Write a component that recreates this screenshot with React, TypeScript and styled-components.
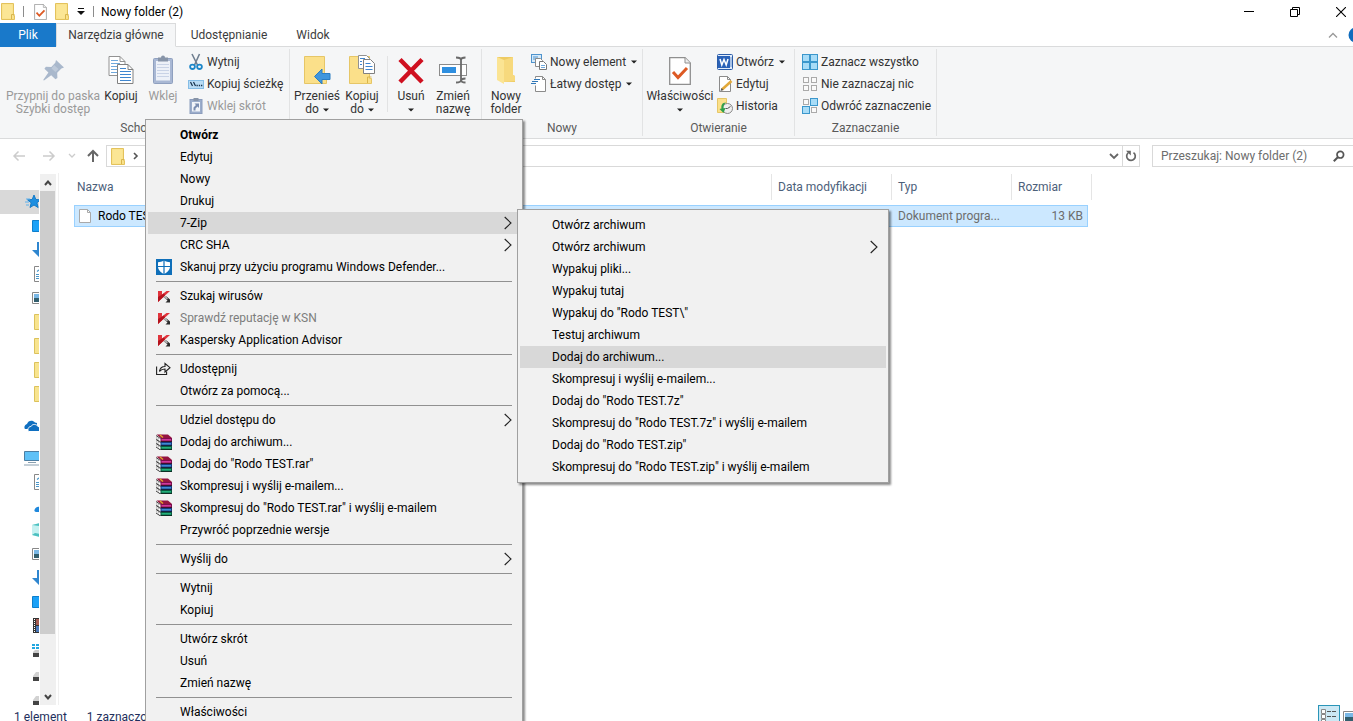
import React from "react";
import styled, { createGlobalStyle } from "styled-components";

const GlobalStyle = createGlobalStyle`
  * { box-sizing: border-box; }
  html, body { margin: 0; height: 100%; overflow: hidden; background: #fff; }
  body, button, input {
    font-family: Roboto, "Noto Sans", sans-serif;
    font-size: 12px;
    color: #000;
  }
  #root { height: 100%; }
  button { background: none; border: 0; padding: 0; margin: 0; }
  ul { list-style: none; margin: 0; padding: 0; }
  svg { display: block; flex: none; }
`;

/* ---------- window shell ---------- */

const Screen = styled.div`
  position: relative;
  height: 100vh;
  overflow: hidden;
`;

const Window = styled.div`
  display: flex;
  flex-direction: column;
  width: calc(100% + 11px);
  height: calc(100vh + 7px);
  background: #fff;
`;

const TitleBar = styled.header`
  display: flex;
  align-items: center;
  height: 23px;
  flex: none;
`;

const QuickAccess = styled.div`
  display: flex;
  align-items: center;
  gap: 8px;
  padding: 0 5px 0 1px;
`;

const QuickDivider = styled.span`
  width: 1px;
  height: 11px;
  margin-right: 2px;
  background: #8c8c8c;
`;

const Title = styled.h1`
  margin: 0;
  flex: 1;
  font-size: 12px;
  font-weight: 400;
`;

const CaptionButton = styled.button`
  display: flex;
  align-items: center;
  justify-content: center;
  width: 46px;
  height: 21px;
`;

/* ---------- ribbon ---------- */

const Tabs = styled.nav`
  display: flex;
  height: 24px;
  flex: none;
  position: relative;
  z-index: 1;
  margin-bottom: -1px;
`;

const Tab = styled.button<{ $kind?: "file" | "active"; $width: number }>`
  width: ${(p) => p.$width}px;
  height: 24px;
  color: ${(p) => (p.$kind === "file" ? "#fff" : "#3c3c3c")};
  background: ${(p) =>
    p.$kind === "file" ? "#1979ca" : p.$kind === "active" ? "#f5f6f7" : "transparent"};
  border: 1px solid transparent;
  border-color: ${(p) => (p.$kind === "active" ? "#dadbdc #dadbdc transparent" : "transparent")};
  background-clip: ${(p) => (p.$kind === "file" ? "border-box" : "padding-box")};
  ${(p) => p.$kind === "active" && "border-bottom-color: #f5f6f7;"}
`;

const TabTools = styled.div`
  display: flex;
  align-items: center;
  gap: 10px;
  margin-left: auto;
`;

const Ribbon = styled.section`
  display: flex;
  flex: none;
  height: 93px;
  background: #f5f6f7;
  border-top: 1px solid #dadbdc;
  border-bottom: 1px solid #dadbdc;
`;

const Group = styled.div<{ $width: number }>`
  display: flex;
  flex-direction: column;
  width: ${(p) => p.$width}px;
  margin: 2px 0;
  padding: 2px 0 0 4px;
  border-right: 1px solid #e2e3e4;
`;

const GroupBody = styled.div`
  display: flex;
  height: 71px;
`;

const GroupName = styled.div`
  margin-left: -4px;
  text-align: center;
  line-height: 15px;
  color: #5a5a5a;
`;

const BigButton = styled.button<{ $width: number; $off?: boolean }>`
  display: flex;
  flex-direction: column;
  align-items: center;
  justify-content: flex-start;
  gap: 3px;
  width: ${(p) => p.$width}px;
  padding-top: 4px;
  line-height: 13px;
  white-space: nowrap;
  color: ${(p) => (p.$off ? "#9a9a9a" : "#333")};
`;

const BigLabel = styled.span`
  display: flex;
  flex-direction: column;
  align-items: center;
`;

const LabelLine = styled.span`
  display: flex;
  align-items: center;
  gap: 4px;
  min-height: 13px;
`;

const InnerDivider = styled.span`
  width: 1px;
  height: 56px;
  margin: 5px 3px 0;
  background: #e2e3e4;
`;

const SmallColumn = styled.div<{ $gap: number }>`
  margin-left: ${(p) => p.$gap}px;
`;

const SmallButton = styled.button<{ $off?: boolean }>`
  display: flex;
  align-items: center;
  gap: 3px;
  height: 22px;
  white-space: nowrap;
  color: ${(p) => (p.$off ? "#9a9a9a" : "#333")};
  > svg:last-child:not(:first-child) { margin-left: 2px; }
`;

/* ---------- address row ---------- */

const AddressRow = styled.div`
  display: flex;
  align-items: center;
  height: 34px;
  flex: none;
`;

const NavButtons = styled.div`
  display: flex;
  align-items: center;
  width: 106px;
  padding-left: 12px;
`;

const NavButton = styled.button<{ $width: number }>`
  width: ${(p) => p.$width}px;
  height: 22px;
`;

const AddressBox = styled.div`
  display: flex;
  align-items: center;
  gap: 8px;
  flex: 1;
  height: 22px;
  padding-left: 4px;
  border: 1px solid #d9d9d9;
`;

const AddressButton = styled.button<{ $line?: boolean }>`
  display: flex;
  align-items: center;
  justify-content: center;
  width: 17px;
  height: 20px;
  border-left: 1px solid ${(p) => (p.$line ? "#d9d9d9" : "transparent")};
`;

const AddressEnd = styled.div`
  display: flex;
  margin-left: auto;
`;

const SearchBox = styled.label`
  display: flex;
  align-items: center;
  width: 204px;
  height: 22px;
  margin: 0 8px 0 12px;
  padding: 0 10px 0 8px;
  border: 1px solid #d9d9d9;
`;

const SearchInput = styled.input`
  flex: 1;
  min-width: 0;
  padding: 0;
  border: 0;
  outline: 0;
  background: transparent;
  &::placeholder { color: #6d6d6d; opacity: 1; }
`;

/* ---------- body ---------- */

const Body = styled.main`
  display: flex;
  flex: 1;
  min-height: 0;
`;

const Tree = styled.ul`
  width: 39px;
  overflow: hidden;
  padding-top: 17px;
`;

const TreeItem = styled.li<{ $root?: boolean; $selected?: boolean; $gap?: boolean }>`
  display: flex;
  align-items: center;
  height: 24px;
  margin-top: ${(p) => (p.$gap ? 8 : 0)}px;
  padding-left: ${(p) => (p.$root ? 24 : 32)}px;
  background: ${(p) => (p.$selected ? "#d9d9d9" : "transparent")};
`;

const ScrollBar = styled.div`
  display: flex;
  flex-direction: column;
  width: 16px;
  margin: 1px 2px 0 1px;
  background: #f0f0f0;
`;

const ScrollButton = styled.button`
  display: flex;
  align-items: center;
  justify-content: center;
  height: 17px;
`;

const ScrollThumb = styled.div`
  width: 15px;
  flex: 443;
  background: #cdcdcd;
`;

const ScrollRest = styled.div`
  flex: 54;
`;

const Files = styled.section`
  flex: 1;
  border-left: 1px solid #f0f0f0;
  padding: 1px 0 0 15px;
`;

const FileTable = styled.table`
  width: 1018px;
  table-layout: fixed;
  border-collapse: separate;
  border-spacing: 0;
`;

const HeadCell = styled.th`
  padding: 0 0 5px;
  font-weight: 400;
  text-align: left;
  color: #4c607a;
`;

const HeadLabel = styled.span<{ $start: number }>`
  display: block;
  height: 26px;
  line-height: 26px;
  padding-left: ${(p) => p.$start}px;
  border-right: 1px solid #e5e5e5;
`;

const OpenHeadLabel = styled(HeadLabel)`
  border-right: 0;
`;

const FileCell = styled.td<{ $edge?: "start" | "end" }>`
  height: 22px;
  padding: 0 4px 0 ${(p) => (p.$edge === "start" ? 4 : 6)}px;
  color: #6d6d6d;
  background: #cce8ff;
  border: 1px solid #99d1ff;
  border-left-width: ${(p) => (p.$edge === "start" ? 1 : 0)}px;
  border-right-width: ${(p) => (p.$edge === "end" ? 1 : 0)}px;
  text-align: ${(p) => (p.$edge === "end" ? "right" : "left")};
  white-space: nowrap;
`;

const FileName = styled.span`
  display: flex;
  align-items: center;
  gap: 7px;
  color: #000;
`;

const StatusBar = styled.footer`
  display: flex;
  align-items: center;
  gap: 20px;
  height: 23px;
  flex: none;
  padding-left: 14px;
  color: #1e2f5c;
`;

const ViewButtons = styled.div`
  display: flex;
  margin-left: auto;
  padding-right: 2px;
`;

const ViewButton = styled.button<{ $on?: boolean }>`
  display: flex;
  align-items: center;
  justify-content: center;
  width: 22px;
  height: 23px;
  background: ${(p) => (p.$on ? "#cce8f4" : "transparent")};
  border: 1px solid ${(p) => (p.$on ? "#2a95b8" : "transparent")};
`;

/* ---------- context menus ---------- */

const Menu = styled.ul<{ $width: number }>`
  position: absolute;
  z-index: 5;
  width: ${(p) => p.$width}px;
  padding: 4px 2px;
  background: #f1f1f1;
  border: 1px solid #a0a0a0;
  box-shadow: 2px 2px 2px rgba(0, 0, 0, 0.45);
`;

const ContextMenu = styled(Menu)`
  left: 145px;
  top: 119px;
`;

const SubMenu = styled(Menu)`
  left: calc(100% - 3px);
  top: -3px;
`;

const Entry = styled.li<{ $hot?: boolean }>`
  position: relative;
  background: ${(p) => (p.$hot ? "#d8d8d8" : "transparent")};
`;

const EntryButton = styled.button<{ $bold?: boolean; $off?: boolean }>`
  display: flex;
  align-items: center;
  width: 100%;
  height: 22px;
  padding: 0 8px;
  white-space: nowrap;
  font-weight: ${(p) => (p.$bold ? 700 : 400)};
  color: ${(p) => (p.$off ? "#7d7d7d" : "#000")};
`;

const EntryIcon = styled.span`
  width: 16px;
  height: 16px;
  margin-right: 8px;
`;

const EntryText = styled.span`
  flex: 1;
  text-align: left;
`;

const Rule = styled.li`
  height: 1px;
  margin: 3px 8px;
  background: #919191;
`;

/* ---------- icons ---------- */

const Caret = () => (
  <svg width="6" height="4" viewBox="0 0 6 4"><path d="M0 0.500h6L3 3.500z" fill="#222" /></svg>
);

const FolderSmall = () => (
  <svg width="14" height="17" viewBox="0 0 14 17">
    <path d="M0.500 0.500h12v12h1v4h-13z" fill="#f9df86" stroke="#e3c25c" />
    <path d="M1.500 1.500h10v14h-10z" fill="#fbe695" />
    <path d="M10.500 16v-4.500h3" fill="none" stroke="#d9b64c" />
  </svg>
);

const CheckDoc = ({ w, h }: { w: number; h: number }) => (
  <svg width={w} height={h} viewBox="0 0 22 28">
    <path d="M0.700 0.700h15.300l5.300 5.300v21.300h-20.600z" fill="#fff" stroke="#8f8f8f" strokeWidth="1.300" />
    <path d="M16 0.700v5.300h5.300" fill="#eee" stroke="#8f8f8f" />
    <path d="M4 15l5 5.500L18 11" fill="none" stroke="#dd5a24" strokeWidth="3" />
  </svg>
);

const QuickMore = () => (
  <svg width="8" height="7" viewBox="0 0 8 7"><path d="M1 0h6v1H1zM0 3h8L4 7z" fill="#111" /></svg>
);

const PinIcon = () => (
  <svg width="32" height="32" viewBox="0 0 32 32">
    <path d="M19 5l8 7.500-2.600 1-4.200 4.300.200 5.200-2 1.200-4.200-4L7 25.500l-.800-.600 5.200-7.300-4-3.800 1.500-2 5.400.200 4-4.200z" fill="#a9b8cc" />
    <path d="M17 10l-2.500 3.500 4 3.500 3-3z" fill="#bdc9d9" />
  </svg>
);

const CopyIcon = () => (
  <svg width="26" height="32" viewBox="0 0 26 32">
    <path d="M1 1.500h11l5 5v14H1z" fill="#fff" stroke="#929292" />
    <path d="M12 1.500v5h5" fill="none" stroke="#929292" />
    <path d="M3 5.500h7M3 8.500h9M3 11.500h9M3 14.500h6M3 17.500h6" stroke="#6fa8dc" />
    <path d="M9.500 9.500h10.500l5 5v14h-15.500z" fill="#fff" stroke="#808080" />
    <path d="M20 9.500v5h5" fill="none" stroke="#808080" />
    <path d="M12 13.500h6M12 16.500h11M12 19.500h11M12 22.500h11M12 25.500h11" stroke="#3f86cf" />
  </svg>
);

const PasteIcon = () => (
  <svg width="22" height="32" viewBox="0 0 22 32">
    <rect x="1.500" y="3.500" width="19" height="25" rx="1" fill="#a9b8d4" stroke="#8fa0bf" />
    <rect x="4" y="6" width="14" height="19.500" fill="#edf1f8" />
    <path d="M5 9.500h12M5 12.500h12M5 15.500h12M5 18.500h12M5 21.500h12" stroke="#c9d3e6" />
    <path d="M6 2.500h3a2 2 0 0 1 4 0h3v4H6z" fill="#8794a8" />
  </svg>
);

const ScissorsIcon = () => (
  <svg width="16" height="18" viewBox="0 0 16 18">
    <path d="M4 1l5.500 11M11.500 1L6.500 12" stroke="#6f7f90" strokeWidth="1.600" fill="none" />
    <ellipse cx="4.500" cy="13.800" rx="2.400" ry="2.200" fill="none" stroke="#1c86c8" strokeWidth="1.800" />
    <ellipse cx="11.500" cy="13.800" rx="2.400" ry="2.200" fill="none" stroke="#1c86c8" strokeWidth="1.800" />
  </svg>
);

const PathIcon = () => (
  <svg width="16" height="16" viewBox="0 0 16 16">
    <rect x="0.500" y="4.500" width="15" height="8" fill="#b9dcf5" stroke="#85bde6" />
    <path d="M2.500 6l2 4M5.500 6l2 4" stroke="#17324d" strokeWidth="1.200" />
    <path d="M8.500 9.500h1.300M10.800 9.500h1.300M13 9.500h1.300" stroke="#17324d" strokeWidth="1.300" />
  </svg>
);

const ShortcutIcon = () => (
  <svg width="16" height="16" viewBox="0 0 16 16">
    <rect x="2" y="1.500" width="12" height="14" fill="#9badcb" stroke="#8c9dbd" />
    <rect x="4" y="4" width="8" height="9.500" fill="#f1f4f9" />
    <rect x="5.500" y="0" width="5" height="3" fill="#8794a8" />
    <path d="M5.500 12.500V9.500L8 7 6.500 5.500H11V10L9.500 8.500 7.500 10.500v2z" fill="#7a8db0" />
  </svg>
);

const MoveToIcon = () => (
  <svg width="28" height="32" viewBox="0 0 28 32">
    <path d="M1.500 1.500h20v22h2v5h-22z" fill="#fbe08a" stroke="#e6c667" />
    <path d="M27 18.500v6h-8v4.500l-7.500-7.500 7.500-7.500v4.500z" fill="#3f96dd" stroke="#2b7dc2" />
  </svg>
);

const CopyToIcon = () => (
  <svg width="28" height="32" viewBox="0 0 28 32">
    <path d="M1.500 1.500h20v22h2v5h-22z" fill="#fbe08a" stroke="#e6c667" />
    <path d="M19.500 28v-6h4" fill="none" stroke="#d9b64c" />
    <path d="M10.500 0.500h8l3 3v10h-11z" fill="#fff" stroke="#929292" />
    <path d="M15.500 4.500h7l4 4v10h-11z" fill="#fff" stroke="#808080" />
    <path d="M12 3.500h5M12 6.500h2M12 9.500h2M17.500 8.500h5M17.500 11.500h7M17.500 14.500h7" stroke="#3f86cf" />
  </svg>
);

const DeleteIcon = () => (
  <svg width="28" height="32" viewBox="0 0 28 32">
    <path d="M3 4.500L25 27M25 4.500L3 27" stroke="#cf1020" strokeWidth="4.500" />
  </svg>
);

const RenameIcon = () => (
  <svg width="30" height="32" viewBox="0 0 30 32">
    <rect x="1.500" y="9.500" width="27" height="11" fill="#fff" stroke="#8b8b8b" />
    <rect x="4" y="12" width="14" height="6" fill="#2f8fe0" />
    <path d="M18 2.500c3 0 5 .500 5 2.500v21c0-2 2-2.500 4.500-2.500M27.500 2.500c-2.500 0-4.500.500-4.500 2.500M18 27.500c3 0 5-.500 5-2.500M23 25c0 2 2 2.500 4.500 2.500" fill="none" stroke="#6a6a6a" strokeWidth="1.800" />
  </svg>
);

const NewFolderIcon = () => (
  <svg width="22" height="32" viewBox="0 0 22 32">
    <path d="M2 2h16v18l2 1v6H6z" fill="#eecb63" />
    <path d="M2 2l7 3v24l-7-4z" fill="#fbe493" />
    <path d="M9 5l9-3v18l2 1v5l-11 1z" fill="#f7d97d" />
  </svg>
);

const NewItemIcon = () => (
  <svg width="16" height="16" viewBox="0 0 16 16">
    <rect x="0.500" y="0.500" width="10" height="8" fill="#d6eafa" stroke="#4e94ce" />
    <path d="M2 3h5M2 5h3" stroke="#4e94ce" />
    <path d="M4.500 4.500h5l2 2v6h-7z" fill="#fff" stroke="#8b8b8b" />
    <path d="M8.500 7.500h4l3 3v5h-7z" fill="#fff" stroke="#777" />
    <path d="M10 11.500h4M10 13.500h4" stroke="#6fa8dc" />
  </svg>
);

const EasyAccessIcon = () => (
  <svg width="16" height="16" viewBox="0 0 16 16">
    <path d="M4.500 2.500v-2h7l3 3v12h-10v-6" fill="#fff" stroke="#8b8b8b" />
    <path d="M11.500 0.500v3h3" fill="none" stroke="#8b8b8b" />
    <path d="M3 3.500h6M1 5.500h6M0 7.500h5" stroke="#2f77b8" />
  </svg>
);

const WordIcon = () => (
  <svg width="16" height="16" viewBox="0 0 16 16">
    <rect x="0.500" y="0.500" width="15" height="15" rx="1" fill="#e4eefb" stroke="#2a5ca8" />
    <rect x="1" y="2" width="12" height="12" fill="#2a62b8" />
    <path d="M3 5l1.800 6L7 5.500 9.200 11 11 5" fill="none" stroke="#fff" strokeWidth="1.500" />
    <path d="M14 3v10" stroke="#6f98d2" />
  </svg>
);

const EditIcon = () => (
  <svg width="16" height="16" viewBox="0 0 16 16">
    <path d="M2.500 0.500h8l3 3v12h-11z" fill="#fff" stroke="#8b8b8b" />
    <path d="M10.500 0.500v3h3" fill="none" stroke="#8b8b8b" />
    <path d="M5 13.500L14.500 5" stroke="#e2a93b" strokeWidth="2.600" />
    <path d="M3.500 15l1-3 2 2z" fill="#555" />
  </svg>
);

const HistoryIcon = () => (
  <svg width="16" height="16" viewBox="0 0 16 16">
    <path d="M0.500 0.500h9v14h-9z" fill="#fbe08a" stroke="#e6c667" />
    <circle cx="10.500" cy="10.500" r="5" fill="#eee" stroke="#8a8a8a" />
    <path d="M10.500 10.500l3-2M10.500 10.500h-2" stroke="#555" />
    <path d="M9 4.500c-4 0-5 3-4.500 6L2.500 11l4 4 2-5-2 .300c0-2 0-4 2.500-5.800z" fill="#2fa04a" />
  </svg>
);

const Grid4 = ({ on }: { on: boolean[] }) => (
  <svg width="16" height="16" viewBox="0 0 16 16">
    {on.map((f, i) => {
      const x = (i % 2) * 8;
      const y = i > 1 ? 8 : 0;
      return f ? (
        <rect key={i} x={x + 0.5} y={y + 0.5} width="7" height="7" fill="#a8dcf7" stroke="#3b97cc" />
      ) : (
        <rect key={i} x={x + 1.5} y={y + 1.5} width="5" height="5" fill="#fafafa" stroke="#aaa" />
      );
    })}
  </svg>
);

const Arrow = ({ dir, color }: { dir: "left" | "right" | "up"; color: string }) => (
  <svg width="14" height="14" viewBox="0 0 14 14">
    <path
      d={{
        left: "M13 7H2M6.500 2.500L2 7l4.500 4.500",
        right: "M1 7h11M7.500 2.500L12 7l-4.500 4.500",
        up: "M7 13V2M2 7l5-5 5 5",
      }[dir]}
      fill="none"
      stroke={color}
      strokeWidth={dir === "up" ? 2 : 1.5}
    />
  </svg>
);

const Chevron = ({ d, w, h, color, sw }: { d: string; w: number; h: number; color: string; sw: number }) => (
  <svg width={w} height={h} viewBox={`0 0 ${w} ${h}`}>
    <path d={d} fill="none" stroke={color} strokeWidth={sw} />
  </svg>
);

const SubArrow = () => <Chevron w={8} h={14} d="M0.700 1L7 7 0.700 13" color="#222" sw={1.1} />;

const RefreshIcon = () => (
  <svg width="12" height="12" viewBox="0 0 12 12">
    <path d="M8.500 2.600A4.300 4.300 0 1 1 3.200 2.800" fill="none" stroke="#666" strokeWidth="1.700" />
    <path d="M1 0.800h4.800v4.700z" fill="#666" />
  </svg>
);

const SearchIcon = () => (
  <svg width="12" height="12" viewBox="0 0 12 12">
    <circle cx="7.300" cy="4.700" r="3.300" fill="none" stroke="#555" strokeWidth="1.700" />
    <path d="M5 7L0.800 11.200" stroke="#555" strokeWidth="2" />
  </svg>
);

const FileIcon = () => (
  <svg width="12" height="14" viewBox="0 0 12 14">
    <path d="M0.500 0.500h8l3 3v10h-11z" fill="#fff" stroke="#a9a9a9" />
    <path d="M8.500 0.500v3h3" fill="none" stroke="#a9a9a9" />
  </svg>
);

const treeIcons: Record<string, React.ReactNode> = {
  star: (
    <>
      <path d="M10 1l1.800 4.500 4.700.300-3.600 3 1.200 4.700L10 11l-4 2.500 1.200-4.700-3.700-3 4.700-.300z" fill="#1f8fe0" stroke="#147bc8" />
      <path d="M2 5h4M1 8h4M2 11h3" stroke="#5db0ec" />
    </>
  ),
  desktop: <path d="M0.500 2.500h15v11h-15z" fill="#1ba1f7" stroke="#0f7fcc" />,
  down: <path d="M5 0h4v7h5l-7 8-7-7h5z" fill="#2f86cf" />,
  doc: (
    <>
      <path d="M2.500 0.500h11v15h-11z" fill="#fff" stroke="#888" />
      <path d="M4 12.500h8M4 10.500h8M4 8.500h8M5 5.500l4-3" stroke="#4a97c9" strokeWidth="1.200" />
    </>
  ),
  picture: (
    <>
      <path d="M0.500 2.500h15v11h-15z" fill="#fff" stroke="#888" />
      <path d="M2 4h12v4H2z" fill="#7ab8e6" />
      <path d="M2 8h12v4H2z" fill="#335f6e" />
    </>
  ),
  folder: <path d="M2.500 0.500h12v15h-12z" fill="#f8e48f" stroke="#dcc25c" />,
  cloud: (
    <>
      <path d="M1 11c-1.500-2 0-4.500 2-5 1-3.500 5.500-4.500 8-1.500l2 .500v6z" fill="#0f6fc0" />
      <path d="M4.500 13.500c-1.500-3 .500-5 2.500-5 1.500-3 5.500-2.500 7 0 3 0 4 5 1 5z" fill="#0f6fc0" stroke="#fff" strokeWidth="1" />
    </>
  ),
  computer: (
    <>
      <path d="M0.500 1.500h17v9h-17z" fill="#5fc1f7" stroke="#4c7ea3" />
      <path d="M4 12.500h8M0 15h18" stroke="#8aa0b0" />
    </>
  ),
  dot: <path d="M2.500 12c.500-2.500 3-4 5.500-3v5H4c-1 0-2-1-1.500-2z" fill="#1f88dc" />,
  cube: (
    <>
      <path d="M0 3l8-2v14l-8-2z" fill="#c5f1f1" />
      <path d="M0 3l8-2v3zM0 13l3-2 5 1v3z" fill="#4cc0c0" />
    </>
  ),
  film: (
    <>
      <path d="M1 0h14v15H1z" fill="#333" />
      <path d="M4 1h9v6H4z" fill="#a55a50" />
      <path d="M4 8h9v6H4z" fill="#4a78b8" />
      <path d="M2.500 1v14" stroke="#fff" strokeDasharray="1 1" />
    </>
  ),
  system: (
    <>
      <path d="M0 2h3v2H0zM4 2h3v2H4zM0 5h3v2H0zM4 5h3v2H4z" fill="#22a7e0" />
      <path d="M1 10l2-2h12v6H1z" fill="#ccc" />
      <path d="M1 11h14v4H1z" fill="#444" />
    </>
  ),
  drive: (
    <>
      <path d="M1 10l3-4h12v5H1z" fill="#d2d2d2" />
      <path d="M1 11h14v4H1z" fill="#444" />
    </>
  ),
};

const TreeIcon = ({ name }: { name: string }) => (
  <svg width="16" height="16" viewBox="0 0 16 16">{treeIcons[name]}</svg>
);

const DefenderIcon = () => (
  <svg width="16" height="16" viewBox="0 0 16 16">
    <rect width="16" height="16" fill="#0f6fb9" />
    <path d="M8 1.500c2 1.200 4 1.700 6 1.700v4c0 4-3 6.300-6 7.800-3-1.500-6-3.800-6-7.800v-4c2 0 4-.500 6-1.700z" fill="#fff" />
    <path d="M8 1v14M1.500 7.500h13" stroke="#0f6fb9" strokeWidth="1.200" />
  </svg>
);

const KasperskyIcon = () => (
  <svg width="16" height="16" viewBox="0 0 16 16">
    <path d="M2 3h4v3.500L10.500 3H14L8.500 8 2 14z" fill="#e0343c" />
    <path d="M2 14V9l6-3.500 1 2z" fill="#b3121c" />
    <path d="M7.500 9l3-.500 3.500 3v3H9.500l2-2z" fill="#2c2c2c" />
    <path d="M7.500 9l3-.500 1.500 2.500-1.500.500z" fill="#b0b0b0" />
  </svg>
);

const ShareIcon = () => (
  <svg width="16" height="16" viewBox="0 0 16 16">
    <path d="M0.600 5.500v8h10v-3" fill="none" stroke="#222" strokeWidth="1.100" />
    <path d="M3.500 10.500C4 7 6 5.500 9 5.500V2.500l5 4.200-5 4.300V8C7 8 5 8.500 3.500 10.500z" fill="#f1f1f1" stroke="#222" strokeWidth="1.100" />
  </svg>
);

const RarIcon = () => (
  <svg width="16" height="16" viewBox="0 0 16 16">
    {[
      ["#7d0f4c", "#d0389a"],
      ["#163a80", "#3f8ad2"],
      ["#0a5a40", "#22b07a"],
    ].map(([dark, light], i) => (
      <g key={dark} transform={`translate(0 ${i * 4})`}>
        <path d="M0 1l4.500 3v4L0 5z" fill="#fff" />
        <path d="M0 1.500l4.500 3M0 5l4.500 3" stroke="#111" strokeWidth="0.800" />
        <path d="M0.800 2.500v2M2.300 3.500v2" stroke="#777" strokeWidth="0.600" />
        <path d="M4.500 4H16v4H4.500z" fill={dark} />
        <path d="M5.500 5H15v1.600H5.500z" fill={light} />
        <path d="M4.500 7.700H16" stroke="#111" strokeWidth="0.700" />
      </g>
    ))}
    <path d="M0.500 0.500h11.500l4 3.500H4.500z" fill="#961440" />
    <path d="M4 1l3 2.500" stroke="#e0a52c" strokeWidth="1.500" />
  </svg>
);

const DetailsIcon = () => (
  <svg width="16" height="16" viewBox="0 0 16 16">
    <path d="M0.500 0.500h4v4h-4zM0.500 5.500h4v4h-4zM0.500 10.500h4v4h-4z" fill="#fff" stroke="#888" />
    <path d="M6 2.500h4M11 2.500h4M6 7.500h4M11 7.500h4M6 12.500h4M11 12.500h4" stroke="#555" />
  </svg>
);

/* ---------- data ---------- */

type MenuEntry =
  | "rule"
  | { text: string; icon?: React.ReactNode; bold?: boolean; off?: boolean; hot?: boolean; arrow?: boolean; sub?: MenuEntry[] };

const zipMenu: MenuEntry[] = [
  { text: "Otwórz archiwum" },
  { text: "Otwórz archiwum", arrow: true },
  { text: "Wypakuj pliki..." },
  { text: "Wypakuj tutaj" },
  { text: 'Wypakuj do "Rodo TEST\\"' },
  { text: "Testuj archiwum" },
  { text: "Dodaj do archiwum...", hot: true },
  { text: "Skompresuj i wyślij e-mailem..." },
  { text: 'Dodaj do "Rodo TEST.7z"' },
  { text: 'Skompresuj do "Rodo TEST.7z" i wyślij e-mailem' },
  { text: 'Dodaj do "Rodo TEST.zip"' },
  { text: 'Skompresuj do "Rodo TEST.zip" i wyślij e-mailem' },
];

const mainMenu: MenuEntry[] = [
  { text: "Otwórz", bold: true },
  { text: "Edytuj" },
  { text: "Nowy" },
  { text: "Drukuj" },
  { text: "7-Zip", hot: true, arrow: true, sub: zipMenu },
  { text: "CRC SHA", arrow: true },
  { text: "Skanuj przy użyciu programu Windows Defender...", icon: <DefenderIcon /> },
  "rule",
  { text: "Szukaj wirusów", icon: <KasperskyIcon /> },
  { text: "Sprawdź reputację w KSN", icon: <KasperskyIcon />, off: true },
  { text: "Kaspersky Application Advisor", icon: <KasperskyIcon /> },
  "rule",
  { text: "Udostępnij", icon: <ShareIcon /> },
  { text: "Otwórz za pomocą..." },
  "rule",
  { text: "Udziel dostępu do", arrow: true },
  { text: "Dodaj do archiwum...", icon: <RarIcon /> },
  { text: 'Dodaj do "Rodo TEST.rar"', icon: <RarIcon /> },
  { text: "Skompresuj i wyślij e-mailem...", icon: <RarIcon /> },
  { text: 'Skompresuj do "Rodo TEST.rar" i wyślij e-mailem', icon: <RarIcon /> },
  { text: "Przywróć poprzednie wersje" },
  "rule",
  { text: "Wyślij do", arrow: true },
  "rule",
  { text: "Wytnij" },
  { text: "Kopiuj" },
  "rule",
  { text: "Utwórz skrót" },
  { text: "Usuń" },
  { text: "Zmień nazwę" },
  "rule",
  { text: "Właściwości" },
];

const tree: { icon: string; root?: boolean; selected?: boolean; gap?: boolean }[] = [
  { icon: "star", root: true, selected: true },
  { icon: "desktop" },
  { icon: "down" },
  { icon: "doc" },
  { icon: "picture" },
  { icon: "folder" },
  { icon: "folder" },
  { icon: "folder" },
  { icon: "folder" },
  { icon: "cloud", root: true, gap: true },
  { icon: "computer", root: true, gap: true },
  { icon: "doc" },
  { icon: "dot" },
  { icon: "cube" },
  { icon: "picture" },
  { icon: "down" },
  { icon: "desktop" },
  { icon: "film" },
  { icon: "system" },
  { icon: "drive" },
  { icon: "drive" },
];

/* ---------- composed parts ---------- */

const MenuItems = ({ entries }: { entries: MenuEntry[] }) => (
  <>
    {entries.map((e, i) =>
      e === "rule" ? (
        <Rule key={i} role="separator" />
      ) : (
        <Entry key={i} $hot={e.hot}>
          <EntryButton $bold={e.bold} $off={e.off} disabled={e.off}>
            <EntryIcon>{e.icon}</EntryIcon>
            <EntryText>{e.text}</EntryText>
            {e.arrow && <SubArrow />}
          </EntryButton>
          {e.sub && (
            <SubMenu $width={372}>
              <MenuItems entries={e.sub} />
            </SubMenu>
          )}
        </Entry>
      )
    )}
  </>
);

const Big = (p: { icon: React.ReactNode; lines: string[]; width: number; off?: boolean; caret?: boolean }) => (
  <BigButton $width={p.width} $off={p.off} disabled={p.off}>
    {p.icon}
    <BigLabel>
      {p.lines.map((line, i) => (
        <LabelLine key={i}>
          {line}
          {p.caret && i === p.lines.length - 1 && <Caret />}
        </LabelLine>
      ))}
    </BigLabel>
  </BigButton>
);

const Small = (p: { icon: React.ReactNode; text: string; off?: boolean; caret?: boolean }) => (
  <SmallButton $off={p.off} disabled={p.off}>
    {p.icon}
    <span>{p.text}</span>
    {p.caret && <Caret />}
  </SmallButton>
);

export default function App() {
  return (
    <Screen>
      <GlobalStyle />
      <Window>
        <TitleBar>
          <QuickAccess>
            <FolderSmall />
            <QuickDivider />
            <CheckDoc w={13} h={16} />
            <FolderSmall />
            <QuickMore />
            <QuickDivider />
          </QuickAccess>
          <Title>Nowy folder (2)</Title>
          <CaptionButton aria-label="Minimalizuj">
            <Chevron w={10} h={10} d="M0 4.500h10" color="#000" sw={1} />
          </CaptionButton>
          <CaptionButton aria-label="Przywróć w dół">
            <Chevron w={10} h={10} d="M0.500 2.500h7v7h-7zM2.500 2.500v-2h7v7h-2" color="#000" sw={1} />
          </CaptionButton>
          <CaptionButton aria-label="Zamknij">
            <Chevron w={10} h={10} d="M0 0l10 10M10 0L0 10" color="#000" sw={1.1} />
          </CaptionButton>
        </TitleBar>

        <Tabs>
          <Tab $kind="file" $width={56}>Plik</Tab>
          <Tab $kind="active" $width={120}>Narzędzia główne</Tab>
          <Tab $width={106}>Udostępnianie</Tab>
          <Tab $width={62}>Widok</Tab>
          <TabTools>
            <button aria-label="Minimalizuj wstążkę">
              <Chevron w={10} h={6} d="M1 5.500L5 1.500l4 4" color="#999" sw={1.3} />
            </button>
            <button aria-label="Pomoc">
              <svg width="16" height="16" viewBox="0 0 16 16">
                <circle cx="8" cy="8" r="7.500" fill="#0f6cbd" />
              </svg>
            </button>
          </TabTools>
        </Tabs>

        <Ribbon>
          <Group $width={290}>
            <GroupBody>
              <Big icon={<PinIcon />} lines={["Przypnij do paska", "Szybki dostęp"]} width={98} off />
              <Big icon={<CopyIcon />} lines={["Kopiuj"]} width={38} />
              <Big icon={<PasteIcon />} lines={["Wklej"]} width={46} off />
              <SmallColumn $gap={2}>
                <Small icon={<ScissorsIcon />} text="Wytnij" />
                <Small icon={<PathIcon />} text="Kopiuj ścieżkę" />
                <Small icon={<ShortcutIcon />} text="Wklej skrót" off />
              </SmallColumn>
            </GroupBody>
            <GroupName>Schowek</GroupName>
          </Group>
          <Group $width={192}>
            <GroupBody>
              <Big icon={<MoveToIcon />} lines={["Przenieś", "do"]} width={46} caret />
              <Big icon={<CopyToIcon />} lines={["Kopiuj", "do"]} width={44} caret />
              <InnerDivider />
              <Big icon={<DeleteIcon />} lines={["Usuń", ""]} width={40} caret />
              <Big icon={<RenameIcon />} lines={["Zmień", "nazwę"]} width={44} />
            </GroupBody>
            <GroupName>Organizowanie</GroupName>
          </Group>
          <Group $width={161}>
            <GroupBody>
              <Big icon={<NewFolderIcon />} lines={["Nowy", "folder"]} width={40} />
              <SmallColumn $gap={5}>
                <Small icon={<NewItemIcon />} text="Nowy element" caret />
                <Small icon={<EasyAccessIcon />} text="Łatwy dostęp" caret />
              </SmallColumn>
            </GroupBody>
            <GroupName>Nowy</GroupName>
          </Group>
          <Group $width={152}>
            <GroupBody>
              <Big icon={<CheckDoc w={22} h={32} />} lines={["Właściwości", ""]} width={66} caret />
              <SmallColumn $gap={4}>
                <Small icon={<WordIcon />} text="Otwórz" caret />
                <Small icon={<EditIcon />} text="Edytuj" />
                <Small icon={<HistoryIcon />} text="Historia" />
              </SmallColumn>
            </GroupBody>
            <GroupName>Otwieranie</GroupName>
          </Group>
          <Group $width={142}>
            <GroupBody>
              <SmallColumn $gap={3}>
                <Small icon={<Grid4 on={[true, true, true, true]} />} text="Zaznacz wszystko" />
                <Small icon={<Grid4 on={[false, false, false, false]} />} text="Nie zaznaczaj nic" />
                <Small icon={<Grid4 on={[false, true, true, false]} />} text="Odwróć zaznaczenie" />
              </SmallColumn>
            </GroupBody>
            <GroupName>Zaznaczanie</GroupName>
          </Group>
        </Ribbon>

        <AddressRow>
          <NavButtons>
            <NavButton $width={30} aria-label="Wstecz"><Arrow dir="left" color="#ccc" /></NavButton>
            <NavButton $width={26} aria-label="Dalej"><Arrow dir="right" color="#ccc" /></NavButton>
            <NavButton $width={18} aria-label="Ostatnie lokalizacje">
              <Chevron w={8} h={6} d="M1 1l3 3 3-3" color="#ccc" sw={1.3} />
            </NavButton>
            <NavButton $width={16} aria-label="W górę"><Arrow dir="up" color="#666" /></NavButton>
          </NavButtons>
          <AddressBox>
            <FolderSmall />
            <Chevron w={6} h={8} d="M1 1l3 3-3 3" color="#555" sw={1.6} />
            <AddressEnd>
              <AddressButton aria-label="Poprzednie lokalizacje">
                <Chevron w={10} h={8} d="M1 2l4 4 4-4" color="#666" sw={1.8} />
              </AddressButton>
              <AddressButton $line aria-label="Odśwież"><RefreshIcon /></AddressButton>
            </AddressEnd>
          </AddressBox>
          <SearchBox>
            <SearchInput aria-label="Przeszukaj" placeholder="Przeszukaj: Nowy folder (2)" />
            <SearchIcon />
          </SearchBox>
        </AddressRow>

        <Body>
          <Tree>
            {tree.map((t, i) => (
              <TreeItem key={i} $root={t.root} $selected={t.selected} $gap={t.gap}>
                <TreeIcon name={t.icon} />
              </TreeItem>
            ))}
          </Tree>
          <ScrollBar>
            <ScrollButton aria-label="Przewiń w górę">
              <Chevron w={8} h={6} d="M1 5l3-3.500L7 5" color="#444" sw={2} />
            </ScrollButton>
            <ScrollThumb />
            <ScrollRest />
            <ScrollButton aria-label="Przewiń w dół">
              <Chevron w={8} h={6} d="M1 1l3 3.500L7 1" color="#444" sw={2} />
            </ScrollButton>
          </ScrollBar>
          <Files>
            <FileTable>
              <colgroup>
                <col width={698} />
                <col width={120} />
                <col width={120} />
                <col width={76} />
                <col width={4} />
              </colgroup>
              <thead>
                <tr>
                  <HeadCell><HeadLabel $start={3}>Nazwa</HeadLabel></HeadCell>
                  <HeadCell><HeadLabel $start={6}>Data modyfikacji</HeadLabel></HeadCell>
                  <HeadCell><HeadLabel $start={6}>Typ</HeadLabel></HeadCell>
                  <HeadCell><OpenHeadLabel $start={6}>Rozmiar</OpenHeadLabel></HeadCell>
                  <HeadCell><HeadLabel $start={0} /></HeadCell>
                </tr>
              </thead>
              <tbody>
                <tr>
                  <FileCell $edge="start">
                    <FileName><FileIcon />Rodo TEST</FileName>
                  </FileCell>
                  <FileCell />
                  <FileCell>Dokument progra...</FileCell>
                  <FileCell $edge="end">13 KB</FileCell>
                  <td />
                </tr>
              </tbody>
            </FileTable>
          </Files>
        </Body>

        <StatusBar>
          <span>1 element</span>
          <span>1 zaznaczony element</span>
          <ViewButtons>
            <ViewButton $on aria-label="Szczegóły"><DetailsIcon /></ViewButton>
            <ViewButton aria-label="Duże ikony"><TreeIcon name="picture" /></ViewButton>
          </ViewButtons>
        </StatusBar>
      </Window>

      <ContextMenu $width={378}>
        <MenuItems entries={mainMenu} />
      </ContextMenu>
    </Screen>
  );
}
